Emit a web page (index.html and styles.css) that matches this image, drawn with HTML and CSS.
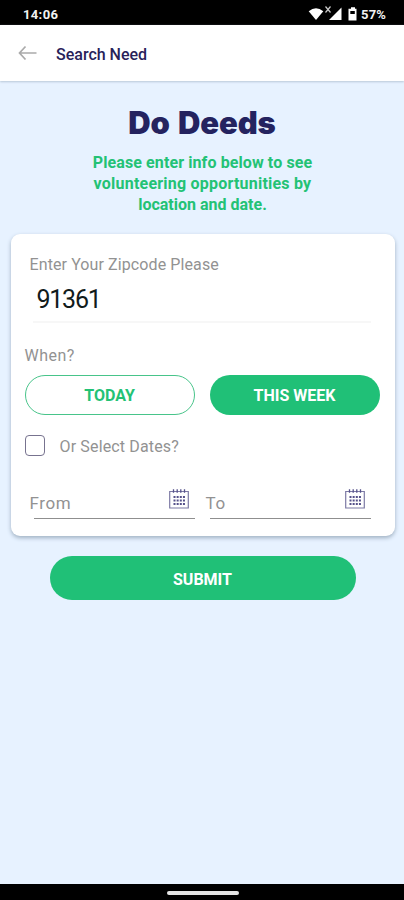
FILE: index.html
```
<!DOCTYPE html>
<html lang="en">
<head>
<meta charset="utf-8">
<title>Search Need</title>
<link rel="stylesheet" href="styles.css">
</head>
<body>
<div class="status">
  <span class="time">14:06</span>
  <svg class="status-icons" width="52" height="18" viewBox="0 0 52 18">
    <path d="M.700 5.200Q8-.800 15.300 5.200L8 14Z" fill="#fff"/>
    <path d="M17.500 .500l5 6M22.500 .500l-5 6" stroke="#ccc" stroke-width="1.200"/>
    <path d="M21 14L33.500 1.500V14Z" fill="#fff"/>
    <path d="M43 1.200h4v1.500h1.500V14.500h-8V2.700H43Z" fill="#fff"/>
    <path d="M42.300 5h4.500v3h-4.500Z" fill="#000"/>
  </svg>
  <span class="battery">57%</span>
</div>
<header class="bar">
  <svg width="20" height="16" viewBox="0 0 20 16" fill="none" stroke="#aaa" stroke-width="1.700"><path d="M18.500 8H2M7.500 1.500L1.500 8L7.500 14.500"/></svg>
  <span class="bar-title">Search Need</span>
</header>
<main>
  <h1>Do Deeds</h1>
  <p class="intro"><span class="l1">Please enter info below to see</span><br><span class="l2">volunteering opportunities by</span><br><span class="l3">location and date.</span></p>
  <section class="card">
    <div class="zip-label">Enter Your Zipcode Please</div>
    <div class="zip">91361</div>
    <div class="when">When?</div>
    <div class="choices">
      <button class="pill outline">TODAY</button>
      <button class="pill solid">THIS WEEK</button>
    </div>
    <label class="check"><span class="box"></span><span class="check-text">Or Select Dates?</span></label>
    <div class="dates">
      <div class="date"><span class="from">From</span>
        <svg width="20" height="20" viewBox="0 0 20 20" fill="none" stroke="#55518a"><path d="M.700 2.500h18.600v16.500H.700Z" stroke="#7d7aa5" stroke-width="1.200"/><path d="M4.500 .300v3.500M8.200 .300v3.500M11.800 .300v3.500M15.500 .300v3.500" stroke-width="1.300"/><path d="M4.500 8h11.500M4.500 11.500h11.500M4.500 15h11.500" stroke-width="1.800" stroke-dasharray="2 1.150"/></svg>
      </div>
      <div class="date"><span class="to">To</span>
        <svg width="20" height="20" viewBox="0 0 20 20" fill="none" stroke="#55518a"><path d="M.700 2.500h18.600v16.500H.700Z" stroke="#7d7aa5" stroke-width="1.200"/><path d="M4.500 .300v3.500M8.200 .300v3.500M11.800 .300v3.500M15.500 .300v3.500" stroke-width="1.300"/><path d="M4.500 8h11.500M4.500 11.500h11.500M4.500 15h11.500" stroke-width="1.800" stroke-dasharray="2 1.150"/></svg>
      </div>
    </div>
  </section>
  <button class="submit">SUBMIT</button>
</main>
<footer class="nav"><span class="handle"></span></footer>
</body>
</html>
```
FILE: styles.css
```
* { box-sizing: border-box; }
body {
  margin: 0;
  height: 900px;
  display: flex;
  flex-direction: column;
  overflow: hidden;
  background: #e7f2ff;
  font-family: Roboto, "Liberation Sans", sans-serif;
  color: #929292;
}
button { border: 0; padding: 0; font: inherit; white-space: nowrap; }
.status {
  height: 25px;
  flex: none;
  display: flex;
  align-items: center;
  padding: 3px 17px 0 23px;
  background: #000;
  color: #f2f2f2;
  font-size: 13px;
  font-weight: 700;
}
.time { letter-spacing: .35px; }
.status-icons { margin: 1px 0 0 auto; }
.battery { margin-left: 1px; width: 26px; letter-spacing: .2px; }
.bar {
  height: 56px;
  flex: none;
  display: flex;
  align-items: center;
  padding: 2px 0 0 18px;
  background: #fff;
  box-shadow: 0 1px 2px #b9c8d8;
}
.bar svg { margin-top: -2px; }
.bar-title {
  margin: 1px 0 0 18px;
  color: #282259;
  font-size: 16px;
  font-weight: 500;
}
main { flex: 1; display: flex; flex-direction: column; align-items: center; }
h1 {
  margin: 23px 0 0;
  color: #24235f;
  font: 900 31px/38px Inter, sans-serif;
  letter-spacing: -.1px;
  word-spacing: 2px;
}
.intro {
  margin: 10px 0 0 1px;
  color: #23c275;
  font-size: 16px;
  font-weight: 700;
  line-height: 21px;
  text-align: center;
  white-space: nowrap;
}
.l1 { letter-spacing: .1px; }
.l2 { letter-spacing: .22px; }
.card {
  width: 384px;
  height: 302px;
  margin: 19px 0 0 1px;
  padding: 21px 15px 0 14px;
  border-radius: 9px;
  background: #fff;
  box-shadow: 0 2px 4px #9fb0c2;
}
.zip-label { margin-left: 5px; font-size: 16px; line-height: 20px; letter-spacing: .1px; }
.zip {
  width: 338px;
  height: 48px;
  margin-left: 8px;
  padding: 9px 0 0 4px;
  border-bottom: 2px solid #f7f7f7;
  color: #111b1b;
  font-size: 25px;
  line-height: 32px;
  letter-spacing: -1.250px;
}
.when { margin-top: 23px; font-size: 16px; line-height: 20px; letter-spacing: .5px; }
.choices { display: flex; gap: 15px; margin-top: 9px; }
.pill {
  width: 170px;
  height: 40px;
  border-radius: 20px;
  font-size: 16px;
  font-weight: 700;
}
.outline { border: 1px solid #48c48a; background: #fff; color: #23c275; }
.solid { background: #20c077; color: #fff; }
.check { display: flex; align-items: center; height: 22px; margin-top: 19px; font-size: 16px; }
.box { width: 20px; height: 21px; border: 1px solid #77738f; border-radius: 4px; }
.check-text { margin: 2px 0 0 15px; letter-spacing: .15px; }
.dates { display: flex; gap: 15px; margin: 32px 0 0 9px; }
.date {
  width: 161px;
  height: 31px;
  display: flex;
  justify-content: space-between;
  padding-right: 6px;
  border-bottom: 1px solid #8f8f8f;
  font-size: 17px;
  line-height: 31px;
}
.date span { margin-left: -4px; letter-spacing: .6px; }
.date svg { margin-top: 1px; }
.submit {
  width: 306px;
  height: 44px;
  margin: 20px 0 0 1px;
  padding-top: 2px;
  border-radius: 22px;
  background: #20c077;
  color: #fff;
  font-size: 16px;
  font-weight: 700;
}
.nav {
  height: 16px;
  flex: none;
  display: flex;
  justify-content: center;
  align-items: center;
  background: #000;
}
.handle { width: 72px; height: 4px; margin: 2px 0 0 1px; border-radius: 2px; background: #e5e5e5; }
```
